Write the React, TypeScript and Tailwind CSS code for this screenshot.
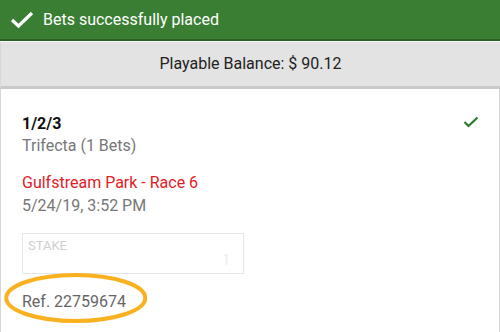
import { useState } from "react";

const BET = {
  selection: "1/2/3",
  type: "Trifecta (1 Bets)",
  race: "Gulfstream Park - Race 6",
  placedAt: "5/24/19, 3:52 PM",
  ref: "22759674",
};

function CheckIcon({ className }: { className?: string }) {
  return (
    <svg viewBox="0 0 24 18" className={className} fill="none">
      <polyline points="2,9 8.5,15 22,2" stroke="currentColor" strokeWidth="3.2" />
    </svg>
  );
}

export default function App() {
  const [balance] = useState(90.12);

  return (
    <div className="relative w-[500px] h-[332px] overflow-hidden bg-white font-['Roboto','Liberation_Sans',sans-serif]">
      <div className="h-[41px] flex items-center pl-[10px] bg-[#3a7e33] border-b-2 border-[#2a6224] text-white">
        <CheckIcon className="w-[24px] h-[18px] mt-[1px]" />
        <span className="ml-[9px] text-[16px] leading-[20px]">Bets successfully placed</span>
      </div>

      <div className="h-[47px] mt-[1px] flex items-center justify-center bg-[#e3e3e3] border-b-[3px] border-[#c9c9c9] border-l border-l-[#d8d8d8]">
        <span className="text-[16px] leading-[20px] text-[#222]">
          Playable Balance: $ {balance.toFixed(2)}
        </span>
      </div>

      <div className="h-[244px] border-x border-b border-[#d6d6d6] pl-[21px] pr-[20px] pt-[25px]">
        <div className="flex justify-between">
          <div className="text-[16px] leading-[20px] font-bold text-[#111]">{BET.selection}</div>
          <svg viewBox="0 0 16 12" className="w-[16px] h-[12px] mt-[2px] text-[#2a7d2a]" fill="none">
            <polyline points="1.5,6 5.5,10 14.5,1.5" stroke="currentColor" strokeWidth="2.2" />
          </svg>
        </div>
        <div className="mt-[2px] text-[16px] leading-[20px] text-[#777]">{BET.type}</div>
        <div className="mt-[17px] text-[16px] leading-[20px] text-[#e3201f]">{BET.race}</div>
        <div className="mt-[3px] text-[16px] leading-[20px] text-[#777]">{BET.placedAt}</div>

        <div className="mt-[17px] w-[222px] h-[41px] border border-[#e6e6e6] pl-[5px] pr-[13px] pt-[4px] flex flex-col">
          <span className="text-[13px] leading-[16px] text-[#d0d0d0]">STAKE</span>
          <span className="self-end -mt-[2px] text-[14px] leading-[16px] text-[#ededed]">1</span>
        </div>

        <div className="mt-[18px] text-[16px] leading-[20px] text-[#666]">Ref. {BET.ref}</div>
      </div>

      <svg className="absolute left-[4px] top-[273px] w-[144px] h-[50px]" viewBox="0 0 144 50" fill="none">
        <ellipse cx="71.75" cy="25" rx="69.5" ry="23" stroke="#fab120" strokeWidth="4" />
      </svg>
    </div>
  );
}
